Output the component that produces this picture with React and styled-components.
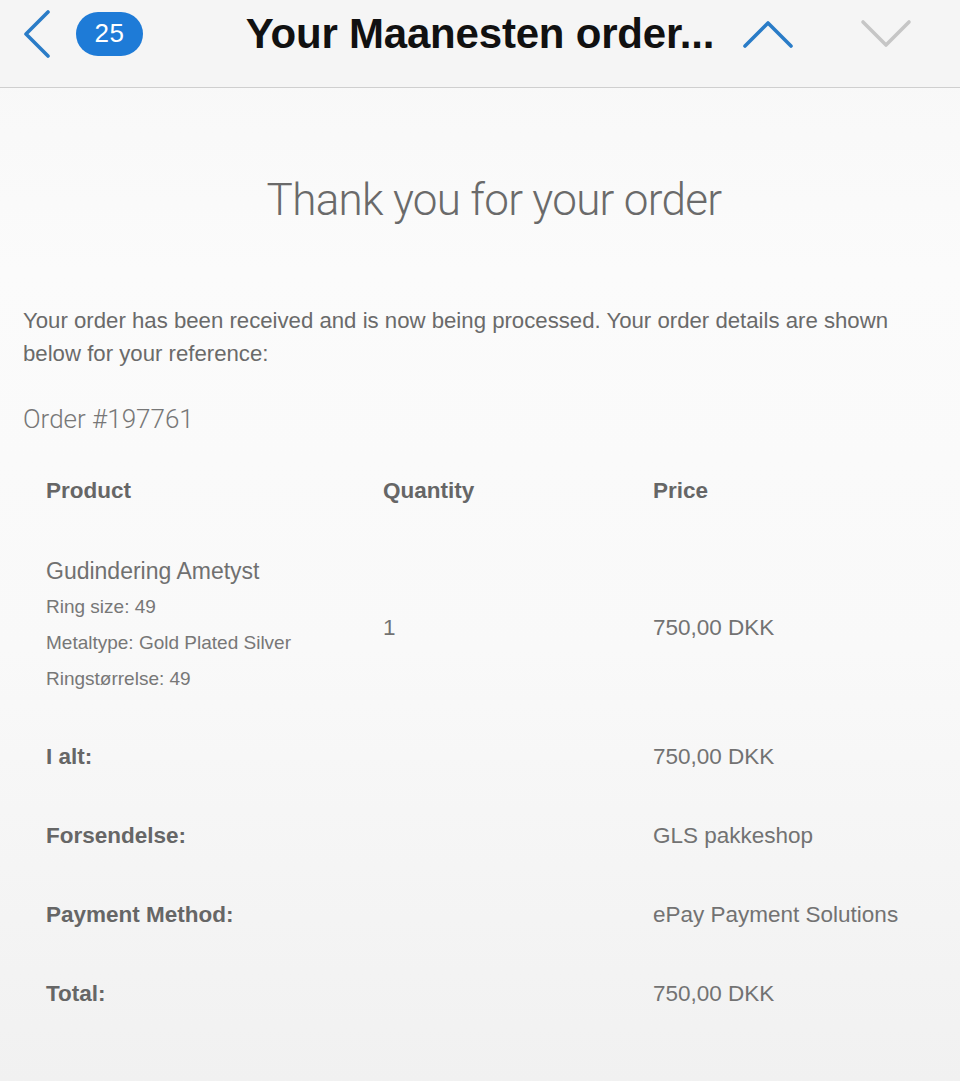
import React from 'react';
import styled, { createGlobalStyle } from 'styled-components';

const GlobalStyle = createGlobalStyle`
  html, body {
    margin: 0;
    padding: 0;
  }
  body {
    background: #f6f6f6;
    font-family: "Liberation Sans", Arial, sans-serif;
    -webkit-font-smoothing: antialiased;
  }
`;

const Screen = styled.div`
  width: 960px;
  min-height: 1081px;
  display: flex;
  flex-direction: column;
  background: linear-gradient(#f7f7f7 0%, #fbfbfb 25%, #f9f9f9 60%, #f1f1f1 100%);
`;

const NavBar = styled.header`
  height: 87px;
  display: grid;
  grid-template-columns: 1fr auto 1fr;
  align-items: center;
  background: #f5f5f5;
  border-bottom: 1.5px solid #cfcfcf;
`;

const NavLeft = styled.div`
  display: flex;
  align-items: center;
  gap: 24px;
  padding-left: 22px;
  margin-top: -20px;
`;

const NavRight = styled.div`
  display: flex;
  align-items: center;
  gap: 66px;
  padding-left: 28px;
  margin-top: -20px;
`;

const Badge = styled.span`
  display: inline-flex;
  align-items: center;
  justify-content: center;
  width: 67px;
  height: 44px;
  border-radius: 22px;
  background: #1e7bd7;
  color: #fff;
  font-size: 26px;
  letter-spacing: 0.5px;
`;

const Title = styled.h1`
  margin: -20px 0 0;
  font-size: 42px;
  font-weight: 700;
  color: #111;
  letter-spacing: -0.2px;
`;

const Chevron = ({ dir, color }) => {
  const points = {
    left: '26,2 4,24 26,46',
    up: '3,27 26,4 49,27',
    down: '3,3 26,26 49,3',
  }[dir];
  const size = dir === 'left' ? [30, 48] : [52, 30];
  return (
    <svg width={size[0]} height={size[1]} viewBox={`0 0 ${size[0]} ${size[1]}`}>
      <polyline
        points={points}
        fill="none"
        stroke={color}
        strokeWidth="3.6"
        strokeLinecap="round"
        strokeLinejoin="round"
      />
    </svg>
  );
};

const Content = styled.main`
  padding: 86px 23px 60px;
  color: #666;
`;

const Heading = styled.h2`
  margin: 0 0 0 28px;
  text-align: center;
  font-family: Roboto, "Liberation Sans", sans-serif;
  font-weight: 300;
  font-size: 44px;
  letter-spacing: -0.7px;
  color: #6a6a6a;
`;

const Intro = styled.p`
  margin: 78px 0 0;
  padding-right: 24px;
  font-size: 22.2px;
  line-height: 33px;
  color: #6a6a6a;
`;

const OrderNo = styled.h3`
  margin: 34px 0 0;
  font-family: Roboto, "Liberation Sans", sans-serif;
  font-weight: 300;
  font-size: 26px;
  color: #777;
`;

const Table = styled.div`
  margin-top: 44px;
  padding-left: 23px;
  display: grid;
  grid-template-columns: 337px 270px 1fr;
  align-items: center;
  font-size: 22.5px;
  color: #6b6b6b;
`;

const Cell = styled.div`
  padding: ${(p) => p.$pad || '0'};
  font-weight: ${(p) => (p.$bold ? 700 : 400)};
  color: ${(p) => (p.$bold ? '#666' : '#727272')};
`;

const ProductName = styled.div`
  font-size: 23px;
  color: #707070;
  margin-bottom: 4px;
`;

const Meta = styled.div`
  font-size: 19px;
  line-height: 36px;
  color: #777;
`;

const totals = [
  ['I alt:', '750,00 DKK'],
  ['Forsendelse:', 'GLS pakkeshop'],
  ['Payment Method:', 'ePay Payment Solutions'],
  ['Total:', '750,00 DKK'],
];

const App = () => {
  return (
    <Screen>
      <GlobalStyle />
      <NavBar>
        <NavLeft>
          <Chevron dir="left" color="#2a7cc7" />
          <Badge>25</Badge>
        </NavLeft>
        <Title>Your Maanesten order...</Title>
        <NavRight>
          <Chevron dir="up" color="#2a7cc7" />
          <Chevron dir="down" color="#c6c6c6" />
        </NavRight>
      </NavBar>
      <Content>
        <Heading>Thank you for your order</Heading>
        <Intro>
          Your order has been received and is now being processed. Your order details are shown
          below for your reference:
        </Intro>
        <OrderNo>Order #197761</OrderNo>
        <Table>
          <Cell $bold>Product</Cell>
          <Cell $bold>Quantity</Cell>
          <Cell $bold>Price</Cell>

          <Cell $pad="54px 0 0">
            <ProductName>Gudindering Ametyst</ProductName>
            <Meta>Ring size: 49</Meta>
            <Meta>Metaltype: Gold Plated Silver</Meta>
            <Meta>Ringstørrelse: 49</Meta>
          </Cell>
          <Cell $pad="54px 0 0">1</Cell>
          <Cell $pad="54px 0 0">750,00 DKK</Cell>

          {totals.map(([label, value], i) => (
            <React.Fragment key={label}>
              <Cell $bold $pad={i === 0 ? '47px 0 0' : '53px 0 0'}>{label}</Cell>
              <Cell />
              <Cell $pad={i === 0 ? '47px 0 0' : '53px 0 0'}>{value}</Cell>
            </React.Fragment>
          ))}
        </Table>
      </Content>
    </Screen>
  );
};

export default App;
